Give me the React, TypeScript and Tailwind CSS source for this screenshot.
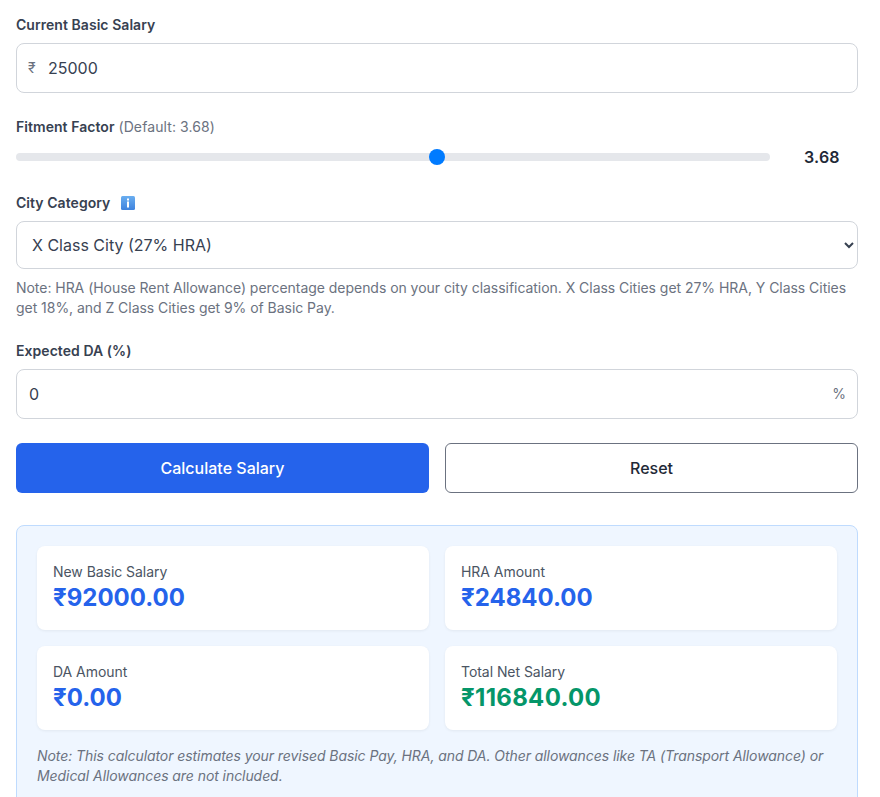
export default function App() {
  const input = "w-full rounded-lg border border-[#d1d5db] bg-white text-base text-[#374151]";
  const label = "block h-[19px] text-sm font-semibold leading-[19px] tracking-[0.05px] text-[#374151]";
  const card = "h-[84px] rounded-lg bg-white px-4 pt-4 shadow-[0_1px_3px_rgba(0,0,0,0.06)]";
  return (
    <div className="min-h-[797px] overflow-hidden bg-white font-['Inter',sans-serif]">
      <div className="w-[874px] px-4 pt-[15px]">
        <label className={label}>Current Basic Salary</label>
        <div className={`${input} mt-[9px] flex h-[50px] items-center`}>
          <span className="ml-[11px] w-[20px] text-sm text-[#6b7280]">₹</span>
          <input readOnly value="25000" className="min-w-0 flex-1 text-[#374151] outline-none" />
        </div>
        <div className="mt-6 h-[20px] text-sm leading-[20px] text-[#6b7280]">
          <span className="font-semibold tracking-[0.05px] text-[#374151]">Fitment Factor</span>{" "}
          <span className="tracking-[0.1px]">(Default: 3.68)</span>
        </div>
        <div className="mt-[10px] flex h-[20px] items-center">
          <div className="relative h-2 w-[754px] rounded-full bg-[#e5e7eb]">
            <div className="absolute left-[413px] top-[-4px] h-4 w-4 rounded-full bg-[#007bff]" />
          </div>
          <span className="ml-[34px] font-semibold tracking-[0.2px] text-[#1f2937]">3.68</span>
        </div>
        <div className="mt-[26px] flex h-[20px] items-center text-sm font-semibold tracking-[0.05px] text-[#374151]">
          City Category
          <svg className="ml-[11px]" width="14" height="14" viewBox="0 0 14 14">
            <defs>
              <linearGradient id="infoGrad" x1="0" y1="0" x2="0" y2="1">
                <stop offset="0" stopColor="#6aaef0" />
                <stop offset="1" stopColor="#3f83de" />
              </linearGradient>
            </defs>
            <rect width="14" height="14" rx="1.5" fill="url(#infoGrad)" />
            <rect x="6" y="2.5" width="2" height="2" fill="#fff" />
            <rect x="6" y="5.5" width="2" height="6" fill="#fff" />
          </svg>
        </div>
        <select className={`${input} mt-2 h-[48px] pl-[11px] pr-[16px] outline-none`} defaultValue="x">
          <option value="x">X Class City (27% HRA)</option>
          <option value="y">Y Class City (18% HRA)</option>
          <option value="z">Z Class City (9% HRA)</option>
        </select>
        <p className="mt-[9px] text-sm leading-[20px] tracking-[-0.04px] text-[#6b7280]">Note: HRA (House Rent Allowance) percentage depends on your city classification. X Class Cities get 27% HRA, Y Class Cities get 18%, and Z Class Cities get 9% of Basic Pay.</p>
        <label className={`${label} mt-[23px]`}>Expected DA (%)</label>
        <div className={`${input} mt-[9px] flex h-[50px] items-center justify-between pl-3 pr-[11px]`}>
          <input readOnly value="0" className="min-w-0 flex-1 text-[#374151] outline-none" />
          <span className="text-sm text-[#6b7280]">%</span>
        </div>
        <div className="mt-6 grid grid-cols-2 gap-4">
          <button className="h-[50px] rounded-md bg-[#2563eb] text-base font-medium text-white">Calculate Salary</button>
          <button className="h-[50px] rounded-md border border-[#6b7280] bg-white text-base font-medium text-[#1f2937]">Reset</button>
        </div>
        <div className="mt-8 rounded-lg border border-[#bfdbfe] bg-[#eff6ff] p-5">
          <div className="grid grid-cols-2 gap-4">
            {[
              ["New Basic Salary", "₹92000.00", "text-[#2563eb]"],
              ["HRA Amount", "₹24840.00", "text-[#2563eb]"],
              ["DA Amount", "₹0.00", "text-[#2563eb]"],
              ["Total Net Salary", "₹116840.00", "text-[#059669] tracking-[0.3px]"],
            ].map(([a, b, c]) => (
              <div key={a} className={card}>
                <div className="text-sm leading-[20px] tracking-[-0.05px] text-[#4b5563]">{a}</div>
                <div className={`text-2xl font-bold leading-[32px] ${c}`}>{b}</div>
              </div>
            ))}
          </div>
          <p className="mt-4 text-sm italic leading-[20px] tracking-[-0.07px] text-[#6b7280]">Note: This calculator estimates your revised Basic Pay, HRA, and DA. Other allowances like TA (Transport Allowance) or Medical Allowances are not included.</p>
        </div>
      </div>
    </div>
  );
}
